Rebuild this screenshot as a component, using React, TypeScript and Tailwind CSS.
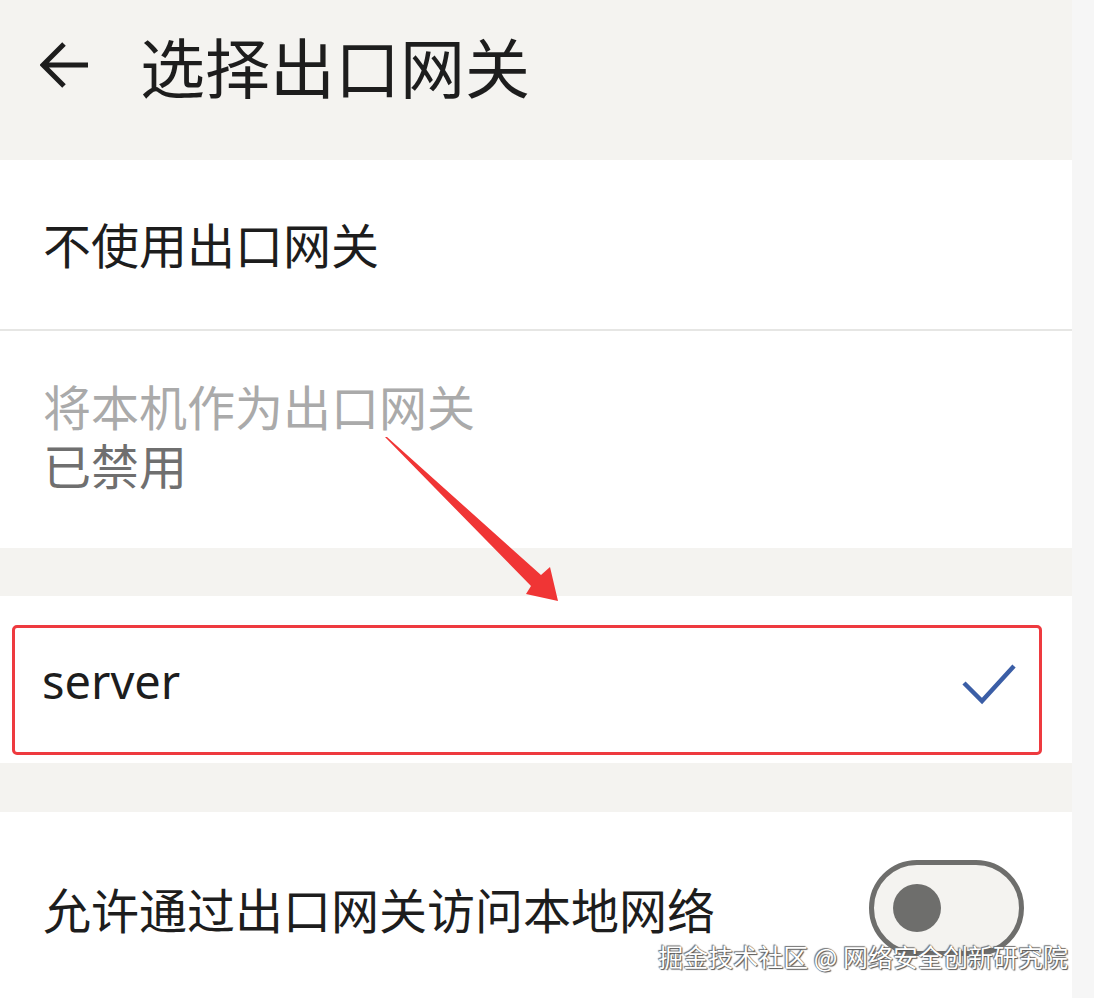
const cjk = { fontFamily: '"Noto Sans CJK SC", "Noto Sans", sans-serif' };

// back arrow in the top bar
function BackArrow() {
  return (
    <svg width="50" height="48" viewBox="0 0 50 48" fill="none">
      <path d="M48 24H4M24 3L3 24l21 21" stroke="#1d1d1d" strokeWidth="5" strokeLinecap="butt" strokeLinejoin="miter" />
    </svg>
  );
}

function Check() {
  return (
    <svg width="56" height="42" viewBox="0 0 56 42" fill="none">
      <path d="M3 20l18 18L53 3" stroke="#3b5ea6" strokeWidth="4.5" />
    </svg>
  );
}

function Toggle() {
  return (
    <div className="w-[155px] h-[96px] rounded-full border-[5px] border-[#6e6e6c] bg-[#f4f3f0] flex items-center pl-[19px]">
      <div className="w-[48px] h-[48px] rounded-full bg-[#6e6e6c]" />
    </div>
  );
}

// red annotation arrow drawn over the screenshot
function Annotation() {
  return (
    <svg className="absolute left-0 top-0 pointer-events-none" width="1094" height="998">
      <polygon
        points="385,437 387,437 541,575 550,567 558,601 526,594 531,586"
        fill="#f03535"
      />
    </svg>
  );
}

export default function App() {
  return (
    <div className="relative w-[1094px] h-[998px] overflow-hidden flex bg-[#f6f6f6]" style={cjk}>
      <div className="w-[1072px] flex flex-col bg-[#f4f3f0]">
        <div className="h-[160px]">
          <div className="h-[130px] flex items-center">
            <div className="w-[140px] pl-[40px] flex items-center">
              <BackArrow />
            </div>
            <span className="text-[65px] leading-none text-[#1d1d1d]">选择出口网关</span>
          </div>
        </div>

        <div className="h-[169px] bg-white flex items-center pl-[43px]">
          <span className="text-[48px] leading-none text-[#1d1d1d] -mt-[4px]">不使用出口网关</span>
        </div>
        <div className="h-[2px] bg-[#e6e6e4]" />

        <div className="h-[217px] bg-white flex flex-col justify-center pl-[43px] pb-[10px]">
          <div className="text-[48px] leading-[59px] text-[#aaaaaa]">将本机作为出口网关</div>
          <div className="text-[48px] leading-[59px] text-[#6f6f6f]">已禁用</div>
        </div>

        <div className="h-[48px]" />

        <div className="h-[167px] bg-white pt-[29px] pl-[12px] pr-[30px]">
          <div className="h-[130px] border-[3px] border-[#ee3a3f] rounded-[5px] flex items-center justify-between pl-[27px] pr-[22px]">
            <span
              className="text-[47px] leading-none text-[#1d1d1d] -mt-[18px]"
              style={{ fontFamily: '"Noto Sans", sans-serif' }}
            >
              server
            </span>
            <div className="-mt-[12px]">
              <Check />
            </div>
          </div>
        </div>

        <div className="h-[49px]" />

        <div className="flex-1 bg-white flex items-start justify-between pl-[43px] pr-[48px] pt-[48px]">
          <span className="text-[48px] leading-[96px] text-[#1d1d1d]">允许通过出口网关访问本地网络</span>
          <Toggle />
        </div>
      </div>
      <div className="flex-1" />

      <Annotation />

      <div
        className="absolute right-[26px] top-[939px] text-[25px] leading-[34px] text-white"
        style={{ textShadow: '0 0 1px #555, 1px 1px 1px #555, -1px -1px 1px #777' }}
      >
        掘金技术社区 @ 网络安全创新研究院
      </div>
    </div>
  );
}
